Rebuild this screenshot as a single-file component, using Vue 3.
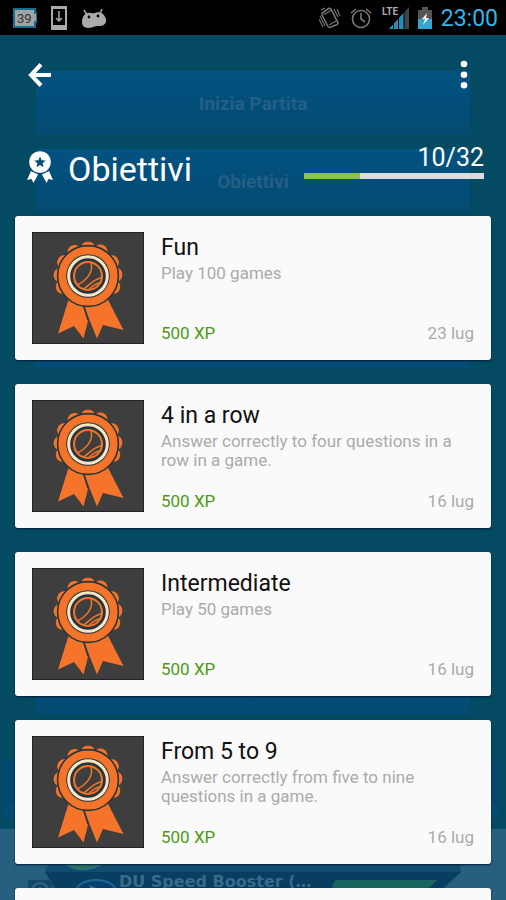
<script setup>
const done = 10
const total = 32
const achievements = [
  { title: 'Fun', text: 'Play 100 games', xp: '500 XP', date: '23 lug' },
  { title: '4 in a row', text: 'Answer correctly to four questions in a row in a game.', xp: '500 XP', date: '16 lug' },
  { title: 'Intermediate', text: 'Play 50 games', xp: '500 XP', date: '16 lug' },
  { title: 'From 5 to 9', text: 'Answer correctly from five to nine questions in a game.', xp: '500 XP', date: '16 lug' }
]
const petals = [-113, -88, -60, -29, 0, 27, 60, 87, 113]
</script>

<template>
  <div class="screen">
    <div class="backdrop" aria-hidden="true">
      <div class="menu">
        <div class="menu-item">Inizia Partita</div>
        <div class="menu-item">Obiettivi</div>
        <div class="menu-item"></div>
        <div class="menu-item"></div>
      </div>
      <div class="last-item"></div>
      <div class="panel"></div>
      <div class="ad">
        <svg class="ad-art" viewBox="0 0 506 71" preserveAspectRatio="none">
          <path d="M56 22h400l5 21-30 28H80L45 43z" fill="#104868" />
          <path d="M45 43h416l-32 28H62z" fill="#083e60" />
          <path d="M45 43l6-8h405l5 8z" fill="#124d70" />
          <path d="M62 33q20 15 45 0z" fill="#28725f" stroke="#3a718c" />
          <rect x="28" y="51" width="24" height="20" fill="#124a68" />
          <circle cx="40" cy="62" r="8" fill="none" stroke="#336985" stroke-width="2" />
          <path d="M40 58v8" stroke="#336985" stroke-width="2" />
          <ellipse cx="96" cy="64" rx="21" ry="13" fill="#07406e" stroke="#1f6698" stroke-width="2" />
          <path d="M89 56l22 9-16 6z" fill="#397093" />
          <path d="M336 51h101l-20 20h-86q0-17 5-20z" fill="#17655f" />
        </svg>
        <span class="ad-text">DU Speed Booster (…</span>
      </div>
    </div>

    <div class="status">
      <div class="status-side">
        <svg width="24" height="20" viewBox="0 0 24 20">
          <path d="M1 1h21v4h2v9h-2v5H1z" fill="#a3a3a3" stroke="#147090" stroke-width="2" />
          <text x="4" y="15" class="battery-number">39</text>
        </svg>
        <svg width="16" height="24" viewBox="0 0 16 24">
          <path d="M0 0h16v24H0z" fill="#aaa" />
          <path d="M2 3h12v16H2z" fill="#000" />
          <path d="M8 5v10M5 12l3 3 3-3" fill="none" stroke="#aaa" stroke-width="1.5" />
        </svg>
        <svg width="26" height="20" viewBox="0 0 26 20">
          <path d="M3 2l3 5M21 1l-2 5" stroke="#aaa" stroke-width="1.5" />
          <path d="M1 14C1 8 5 4 10 5c2 .5 3 .5 5-.5 5-1.500 9 2 10 7 .5 4-2 6.500-7 6.500-3 0-4 0-7 1.500C6 20.500 1 20 1 14z" fill="#aaa" />
          <circle cx="8" cy="9" r="1.400" /><circle cx="17" cy="8" r="1.400" />
        </svg>
      </div>
      <div class="status-side right">
        <svg width="22" height="24" viewBox="0 0 22 24" fill="none" stroke="#777">
          <path d="M9.500 2.500Q11 2 12 3l7 14q0 1-1 1.500L11 21.500q-1.500 0-2-1L3 9q-.5-1.500 1-2.500z" stroke-width="1.600" />
          <path d="M5 8.500l7-4M10 19l7-4M2 4l4-2M1 10l5 10M0 13l4 8M15 3l4 8M18 3l3 7" stroke-width="1.100" />
        </svg>
        <svg width="22" height="22" viewBox="0 0 22 22" fill="none" stroke="#777" stroke-width="1.600">
          <circle cx="11" cy="12" r="8.500" /><path d="M11 6v6l4 3M1 6l5-4M21 6l-5-4" />
        </svg>
        <svg width="28" height="24" viewBox="0 0 28 24">
          <path d="M28 1v22H8z" fill="#444" />
          <path d="M23 6.500V23H8z" fill="#258fb8" />
          <path d="M12.500 16v8M17.500 11v13M23 5v19" stroke="#000" />
          <path d="M0 0h17v10H0z" />
          <text x="1" y="9" class="lte">LTE</text>
        </svg>
        <svg width="14" height="22" viewBox="0 0 14 22">
          <path d="M4 0h6v3h4v19H0V3h4z" fill="#555" />
          <path d="M0 12h14v10H0z" fill="#33a5d0" />
          <path d="M9 6l-5 6h3l-2 6 6-7H8z" fill="#fff" />
        </svg>
        <span class="clock">23:00</span>
      </div>
    </div>

    <header class="toolbar">
      <button class="icon-button" aria-label="Indietro">
        <svg width="24" height="24" viewBox="0 0 24 24" fill="none" stroke="#fff" stroke-width="4">
          <path d="M13 1.500L3 12l10 10.500M2 12h21" />
        </svg>
      </button>
      <button class="icon-button" aria-label="Altro">
        <svg width="8" height="30" viewBox="0 0 8 30" fill="#fff">
          <circle cx="4" cy="4" r="3.300" /><circle cx="4" cy="14.700" r="3.300" /><circle cx="4" cy="25.300" r="3.300" />
        </svg>
      </button>
    </header>

    <section class="summary">
      <svg width="28" height="32" viewBox="0 0 28 32" fill="#fff">
        <path d="M5 20l7 3.500-4.500 8.500-2-4L1 29zM23 20l-7 3.500 4.500 8.500 2-4 4.500 1z" />
        <circle cx="14" cy="11" r="10.800" />
        <path d="M14 5.500l1.600 3.700 4 .4-3 2.600.9 4L14 14.100l-3.500 2.100.9-4-3-2.600 4-.4z" fill="#035078" />
      </svg>
      <h1>Obiettivi</h1>
      <div class="progress">
        <span class="count">{{ done }}/{{ total }}</span>
        <div class="track"><div class="bar" :style="{ width: (done / total) * 100 + '%' }"></div></div>
      </div>
    </section>

    <main class="list">
      <article v-for="item in achievements" :key="item.title" class="card">
        <svg class="badge" viewBox="0 0 112 112">
          <rect width="112" height="112" fill="#3e3e3e" />
          <rect x=".5" y=".5" width="111" height="111" fill="none" stroke="#222" />
          <g v-for="a in petals" :key="a" :transform="`rotate(${a} 56 44)`">
            <ellipse cx="56" cy="15" rx="7" ry="5.800" fill="#f5742a" stroke="#26363a" stroke-width=".6" />
          </g>
          <path d="M37 66L26 101.500 42 94l9.500 12.500L56 89 51 74zM52 74l13 32.500L71 93l20.500 5L75 66z" fill="#f5742a" />
          <path d="M51.500 73L56 88" stroke="#26363a" stroke-width="1.500" />
          <circle cx="56" cy="44" r="30.400" fill="#f5742a" stroke="#26363a" stroke-width="1.600" />
          <circle cx="56" cy="44" r="21.800" fill="#26363a" />
          <circle cx="56" cy="44" r="19.300" fill="none" stroke="#f8e5c4" stroke-width="3" />
          <circle cx="56" cy="44" r="14" fill="#3e3e3e" stroke="#f5742a" stroke-width="2" />
          <path d="M59 31c3 9-5 18-14 22M69 46c-7 1-11 6-17 11M67 51c-4 1-6 3-10 6" fill="none" stroke="#f5742a" stroke-width="1.500" />
        </svg>
        <div class="body">
          <h2>{{ item.title }}</h2>
          <p>{{ item.text }}</p>
          <div class="meta">
            <span class="xp">{{ item.xp }}</span>
            <span class="date">{{ item.date }}</span>
          </div>
        </div>
      </article>
      <article class="card"></article>
    </main>
  </div>
</template>

<style>
body {
  margin: 0;
}
</style>

<style scoped>
.screen {
  position: relative;
  box-sizing: border-box;
  height: 100vh;
  overflow: hidden;
  background: #034a62;
  font-family: Roboto, sans-serif;
}
.backdrop {
  position: absolute;
  inset: 0;
}
.menu {
  display: flex;
  flex-direction: column;
  gap: 15px;
  padding: 71px 36px 0;
}
.menu-item,
.last-item {
  box-sizing: border-box;
  height: 63px;
  border-radius: 2px;
  background: linear-gradient(#035281, #034b72);
}
.menu-item {
  display: flex;
  align-items: center;
  justify-content: center;
  padding-top: 2px;
  color: #245f85;
  font-size: 19px;
  font-weight: 700;
}
.last-item {
  position: absolute;
  left: 36px;
  right: 36px;
  bottom: 186px;
}
.panel {
  position: absolute;
  left: 3px;
  right: 8px;
  bottom: 81px;
  height: 59px;
  border-radius: 4px;
  background: linear-gradient(#034670 75%, #034b74 75%);
}
.ad {
  position: absolute;
  left: 0;
  right: 0;
  bottom: 0;
  height: 71px;
  background: #275f7f;
}
.ad-art {
  width: 100%;
  height: 71px;
}
.ad-text {
  position: absolute;
  left: 119px;
  top: 44px;
  color: #386b8b;
  font: 700 16px/18px "DejaVu Sans", sans-serif;
}
.status {
  position: relative;
  display: flex;
  justify-content: space-between;
  height: 35px;
  padding: 0 8px 0 13px;
  background: #000;
}
.status-side {
  display: flex;
  align-items: center;
  gap: 14px;
}
.right {
  gap: 9px;
}
.battery-number {
  font: 13px Roboto, sans-serif;
  fill: #333;
}
.lte {
  font: 700 10px Roboto, sans-serif;
  fill: #aaa;
}
.clock {
  padding-top: 2px;
  color: #33b5e5;
  font-size: 23px;
}
.toolbar {
  position: relative;
  display: flex;
  align-items: center;
  justify-content: space-between;
  height: 79px;
  padding: 0 38px 0 28px;
}
.icon-button {
  display: flex;
  padding: 0;
  border: 0;
  background: none;
}
.summary {
  position: relative;
  display: flex;
  align-items: flex-start;
  gap: 14px;
  height: 102px;
  box-sizing: border-box;
  padding: 37px 22px 0 26px;
  color: #fff;
}
h1 {
  flex: 1;
  margin: 0;
  font-size: 34px;
  font-weight: 400;
  line-height: 36px;
}
.progress {
  flex: 0 0 180px;
  margin-top: -8px;
  text-align: right;
}
.count {
  display: block;
  font-size: 25px;
  line-height: 30px;
}
.track {
  height: 6px;
  background: #dcdcdc;
}
.bar {
  height: 6px;
  background: #8bc34a;
}
.list {
  position: relative;
  display: flex;
  flex-direction: column;
  gap: 24px;
  padding: 0 15px;
}
.card {
  display: flex;
  gap: 17px;
  box-sizing: border-box;
  min-height: 144px;
  padding: 16px 17px;
  border-radius: 3px;
  background: #fafafa;
  box-shadow: 0 1px 2px #001c38;
}
.badge {
  flex: 0 0 112px;
  height: 112px;
}
.body {
  display: flex;
  flex: 1;
  flex-direction: column;
}
h2 {
  margin: 0;
  color: #111;
  font-size: 23px;
  font-weight: 400;
  line-height: 32px;
}
p {
  margin: 0;
  color: #aaa;
  font-size: 17px;
  line-height: 19px;
}
.meta {
  display: flex;
  justify-content: space-between;
  margin-top: auto;
  font-size: 17px;
  line-height: 22px;
}
.xp {
  color: #4c9a14;
}
.date {
  color: #aaa;
}
</style>
